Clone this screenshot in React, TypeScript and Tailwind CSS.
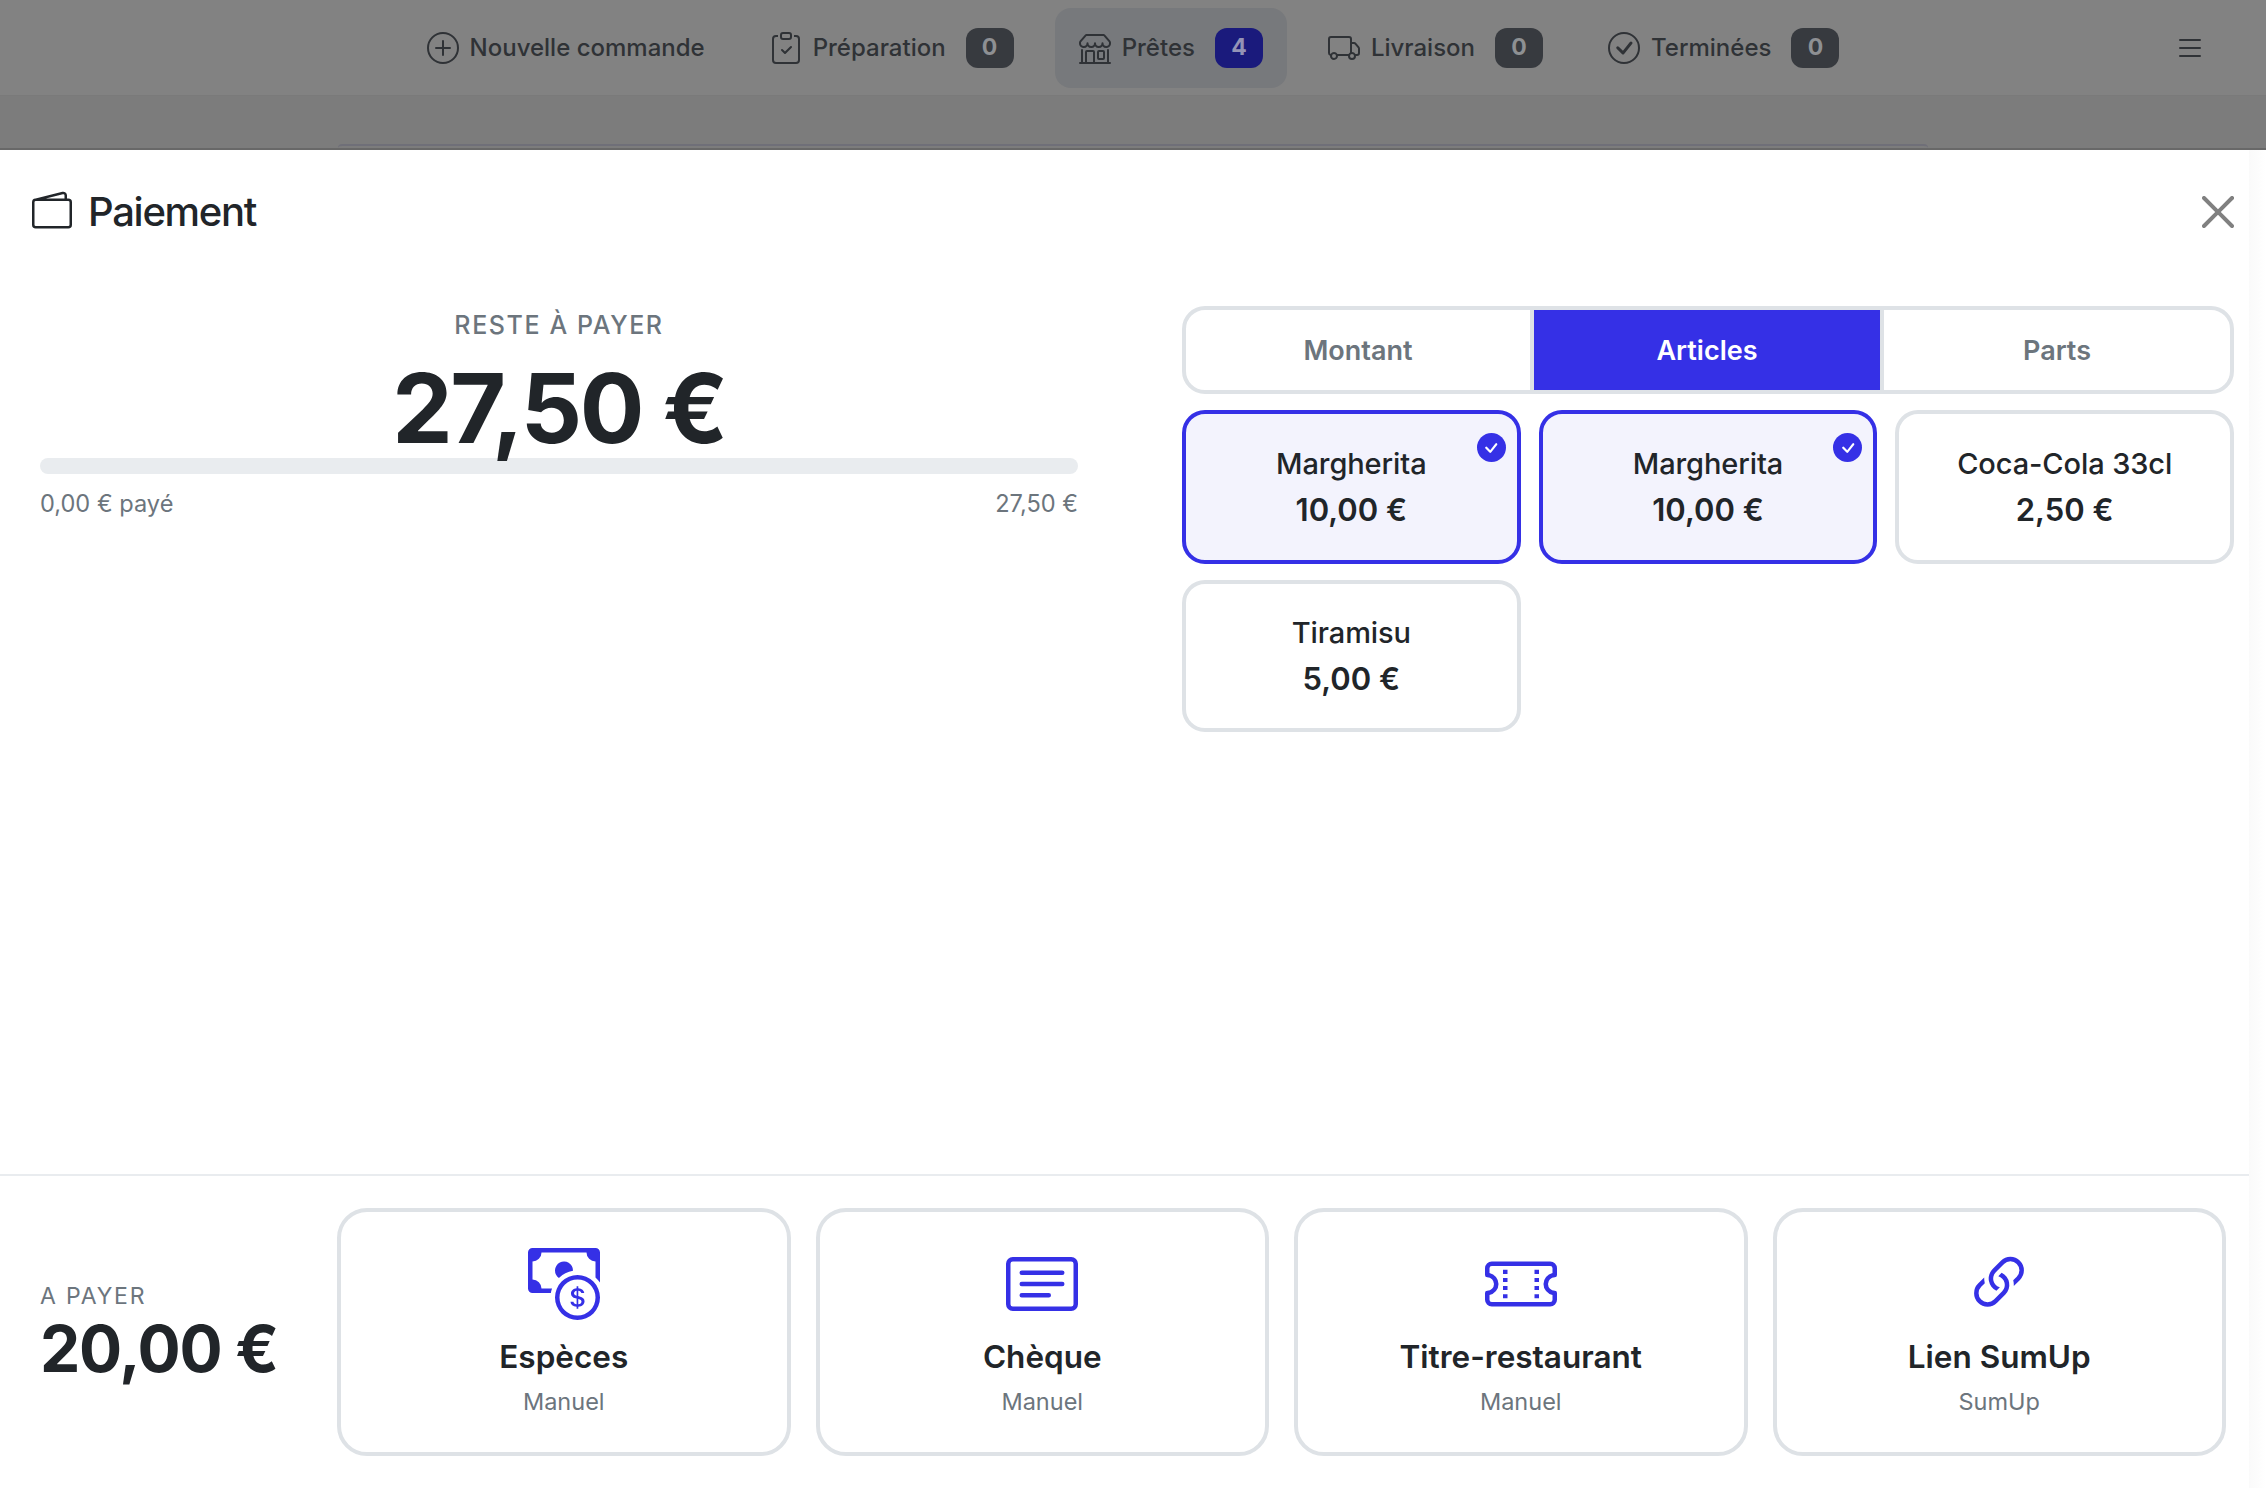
import type { ReactNode } from 'react';
import {
  BsPlusCircle,
  BsClipboardCheck,
  BsShop,
  BsTruck,
  BsCheckCircle,
  BsList,
  BsWallet2,
  BsCheck,
  BsCashCoin,
  BsCardText,
  BsTicketPerforated,
  BsLink45Deg,
} from 'react-icons/bs';

const navItems = [
  { label: 'Préparation', icon: <BsClipboardCheck size={32} />, count: 0 },
  { label: 'Prêtes', icon: <BsShop size={32} />, count: 4, active: true },
  { label: 'Livraison', icon: <BsTruck size={32} />, count: 0 },
  { label: 'Terminées', icon: <BsCheckCircle size={32} />, count: 0 },
];

const articles = [
  { name: 'Margherita', price: '10,00 €', selected: true, height: 'h-[154px]' },
  { name: 'Margherita', price: '10,00 €', selected: true, height: 'h-[154px]' },
  { name: 'Coca-Cola 33cl', price: '2,50 €', selected: false, height: 'h-[154px]' },
  { name: 'Tiramisu', price: '5,00 €', selected: false, height: 'h-[152px]' },
];

const methods = [
  { name: 'Espèces', provider: 'Manuel', icon: <BsCashCoin size={72} /> },
  { name: 'Chèque', provider: 'Manuel', icon: <BsCardText size={72} /> },
  { name: 'Titre-restaurant', provider: 'Manuel', icon: <BsTicketPerforated size={72} /> },
  { name: 'Lien SumUp', provider: 'SumUp', icon: <BsLink45Deg size={72} /> },
];

function NavItem({ icon, label, count, active }: { icon: ReactNode; label: string; count?: number; active?: boolean }) {
  return (
    <div className={`flex h-[80px] items-center rounded-[16px] px-[24px] ${active ? 'bg-[#77797c]' : ''}`}>
      {icon}
      <span className="ml-[11px] text-[24px] leading-[32px] font-medium">{label}</span>
      {count !== undefined && (
        <span
          className={`ml-[20px] flex h-[40px] w-[48px] items-center justify-center rounded-[12px] text-[23px] font-bold ${
            active ? 'bg-[#1a1a7c] text-[#9493b6]' : 'bg-[#373a3f] text-[#8e9093]'
          }`}
        >
          {count}
        </span>
      )}
    </div>
  );
}

export default function App() {
  return (
    <div className="flex h-[1488px] w-[2266px] flex-col overflow-hidden bg-white font-['Inter',sans-serif] text-[#212529]">
      {/* dimmed page behind the modal */}
      <header className="grid h-[96px] grid-cols-[1fr_auto_1fr] items-center border-b border-[#7a7a7a] bg-[#828282] text-[#2f3236]">
        <div />
        <nav className="flex items-center gap-[17px]">
          <NavItem icon={<BsPlusCircle size={32} />} label="Nouvelle commande" />
          {navItems.map((item) => (
            <NavItem key={item.label} {...item} />
          ))}
        </nav>
        <div className="justify-self-end pr-[60px]">
          <BsList size={32} />
        </div>
      </header>
      <div className="flex h-[54px] flex-col justify-end bg-[#7c7c7c]">
        <div className="mx-[338px] h-[4px] rounded-t-[8px] border-t-2 border-[#6f6f78]" />
        <div className="h-[2px] bg-[#686868]" />
      </div>

      {/* modal */}
      <div className="flex min-h-0 flex-1">
        <div className="flex min-w-0 flex-1 flex-col">
          <div className="flex h-[122px] items-center justify-between pr-[15px] pl-[32px]">
            <div className="flex items-center gap-[16px]">
              <BsWallet2 size={40} />
              <h1 className="pt-[2px] text-[40px] leading-[48px] font-medium tracking-[-1.3px]">Paiement</h1>
            </div>
            <svg className="mt-[1px]" width="32" height="32" viewBox="0 0 16 16" fill="#808080">
              <path d="M.293.293a1 1 0 0 1 1.414 0L8 6.586 14.293.293a1 1 0 1 1 1.414 1.414L9.414 8l6.293 6.293a1 1 0 0 1-1.414 1.414L8 9.414l-6.293 6.293a1 1 0 0 1-1.414-1.414L6.586 8 .293 1.707a1 1 0 0 1 0-1.414" />
            </svg>
          </div>

          <main className="flex flex-1 gap-[104px] pl-[40px]">
            <section className="w-[1038px] pt-[38px]">
              <div className="text-center text-[25px] leading-[30px] font-medium tracking-[1.6px] text-[#6c757d]">RESTE À PAYER</div>
              <div className="mt-[20px] h-[96px] text-center text-[96px] leading-[96px] font-bold tracking-[-2.4px]">27,50 €</div>
              <div className="mt-[2px] h-[16px] rounded-full bg-[#e9ecef]" />
              <div className="mt-[16px] flex justify-between text-[23.6px] leading-[28px] text-[#6c757d]">
                <span>0,00 € payé</span>
                <span>27,50 €</span>
              </div>
            </section>

            <section className="w-[1052px] pt-[34px]">
              <div className="grid h-[88px] grid-cols-[344px_354px_1fr] overflow-hidden rounded-[23px] border-4 border-[#dee2e6] text-[27px] font-semibold text-[#6c757d]">
                <div className="flex items-center justify-center pt-[2px]">Montant</div>
                <div className="flex items-center justify-center border-x-4 border-[#dee2e6] bg-[#3530e6] pt-[2px] text-white">Articles</div>
                <div className="flex items-center justify-center pt-[2px]">Parts</div>
              </div>
              <div className="mt-[16px] grid grid-cols-3 gap-x-[18px] gap-y-[16px]">
                {articles.map((a, i) => (
                  <div
                    key={i}
                    className={`relative flex flex-col items-center justify-center rounded-[23px] border-4 pb-[1px] ${a.height} ${
                      a.selected ? 'border-[#3530e6] bg-[#f3f3fd]' : 'border-[#dee2e6] bg-white'
                    }`}
                  >
                    <span className="text-[29px] leading-[45px] font-medium tracking-[-0.1px]">{a.name}</span>
                    <span className="text-[31px] leading-[47px] font-semibold">{a.price}</span>
                    {a.selected && (
                      <span className="absolute top-[19px] right-[11px] flex h-[29px] w-[29px] items-center justify-center rounded-full bg-[#3530e6] text-white">
                        <BsCheck size={24} />
                      </span>
                    )}
                  </div>
                ))}
              </div>
            </section>
          </main>

          <footer className="flex h-[314px] items-center border-t-2 border-[#e9ecef] pr-[23px] pl-[40px]">
            <div className="w-[297px] flex-none pt-[2px]">
              <div className="text-[23px] leading-[28px] tracking-[1.8px] text-[#6c757d]">A PAYER</div>
              <div className="mt-[3px] text-[64px] leading-[72px] font-bold tracking-[-1.2px]">20,00 €</div>
            </div>
            <div className="grid flex-1 grid-cols-4 gap-[25px]">
              {methods.map((m) => (
                <div key={m.name} className="flex h-[248px] flex-col items-center rounded-[30px] border-4 border-[#dee2e6] pt-[36px]">
                  <span className="text-[#3530e6]">{m.icon}</span>
                  <span className="mt-[19px] text-[31.5px] leading-[36px] font-semibold">{m.name}</span>
                  <span className="mt-[13px] text-[23.5px] leading-[28px] text-[#6c757d]">{m.provider}</span>
                </div>
              ))}
            </div>
          </footer>
        </div>
        <div className="w-[17px] flex-none bg-gradient-to-r from-[#fafafa] to-white" />
      </div>
    </div>
  );
}
